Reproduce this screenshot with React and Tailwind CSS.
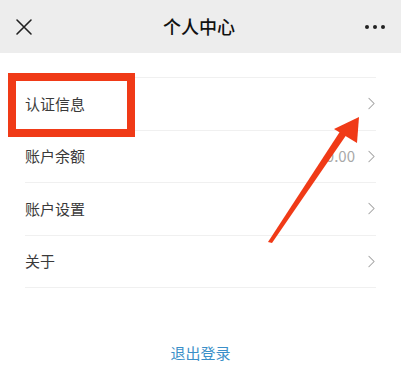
import { ChevronRight } from "lucide-react";

const rows = [
  { label: "认证信息" },
  { label: "账户余额", value: "0.00" },
  { label: "账户设置" },
  { label: "关于" },
];

export default function App() {
  return (
    <div
      className="relative h-[375px] w-[401px] overflow-hidden bg-white"
      style={{ fontFamily: '"Noto Sans CJK SC", "Noto Sans", sans-serif' }}
    >
      <header className="flex h-[53px] items-center justify-between bg-[#ededed] px-[14px]">
        <svg width="18" height="18" viewBox="0 0 18 18" className="ml-[1px]">
          <path d="M2 2 L16 16 M16 2 L2 16" stroke="#222" strokeWidth="1.6" strokeLinecap="round" />
        </svg>
        <h1 className="text-[18px] font-medium text-[#111]">个人中心</h1>
        <div className="flex gap-[4px] pr-[2px]">
          <span className="h-[4px] w-[4px] rounded-full bg-[#222]" />
          <span className="h-[4px] w-[4px] rounded-full bg-[#222]" />
          <span className="h-[4px] w-[4px] rounded-full bg-[#222]" />
        </div>
      </header>

      <div className="mt-[24px] px-[25px]">
        <div className="border-t border-[#f0f0f0]" />
        {rows.map((row) => (
          <div
            key={row.label}
            className="flex h-[52.5px] items-center justify-between border-b border-[#f0f0f0]"
          >
            <span className="text-[15px] text-[#3a3a3a]">{row.label}</span>
            <div className="flex items-center gap-[6px]">
              {row.value && <span className="text-[15px] text-[#a8a8a8]">{row.value}</span>}
              <ChevronRight size={21} strokeWidth={1.2} className="mr-[-6px] text-[#a0a0a0]" />
            </div>
          </div>
        ))}
      </div>

      <div className="mt-[54px] text-center text-[15px] text-[#3b8fc8]">退出登录</div>

      {/* annotation overlay */}
      <div className="absolute left-[8px] top-[73px] h-[64px] w-[127px] border-[8px] border-[#f03a17]" />
      <svg className="absolute left-0 top-0" width="401" height="375" viewBox="0 0 401 375">
        <polygon points="268,242 272,243 347,134 341,130" fill="#f03a17" />
        <polygon points="359,117 334,129 357,143" fill="#f03a17" />
      </svg>
    </div>
  );
}
